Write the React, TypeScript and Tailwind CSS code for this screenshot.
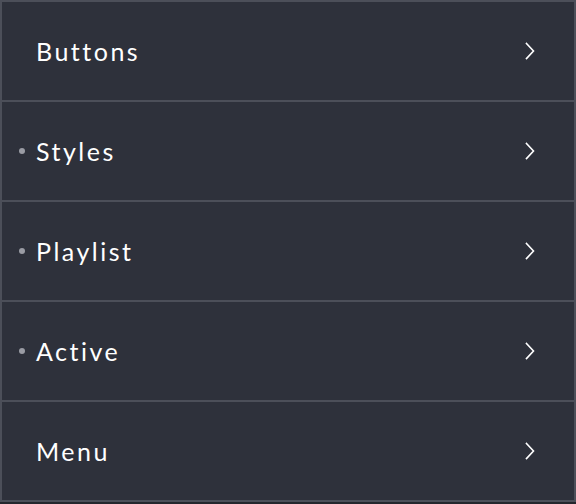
const items = [
  { label: 'Buttons', dot: false },
  { label: 'Styles', dot: true },
  { label: 'Playlist', dot: true },
  { label: 'Active', dot: true },
  { label: 'Menu', dot: false },
];

function Chevron() {
  return (
    <svg width="12" height="18" viewBox="0 0 12 18" fill="none" className="shrink-0">
      <path d="M2.5 1.5 L9.5 9 L2.5 16.5" stroke="#ffffff" strokeWidth="1.6" strokeLinecap="square" />
    </svg>
  );
}

export default function App() {
  return (
    <div className="min-h-screen w-[576px] bg-[#24262d]" style={{ fontFamily: 'Lato, "Noto Sans", sans-serif' }}>
      <ul className="border-2 border-b-0 border-[#4c4f59] bg-[#2e313b]">
        {items.map((item) => (
          <li
            key={item.label}
            className="flex h-[100px] items-center justify-between border-b-2 border-[#4c4f59] pl-[34px] pr-[38px]"
          >
            <div className="relative flex items-center">
              {item.dot && (
                <span className="absolute -left-[17px] top-1/2 h-[6px] w-[6px] -translate-y-1/2 rounded-full bg-[#9a9ca4]" />
              )}
              <span className="font-normal text-[25px] leading-none tracking-[0.1em] text-white">{item.label}</span>
            </div>
            <Chevron />
          </li>
        ))}
      </ul>
    </div>
  );
}
